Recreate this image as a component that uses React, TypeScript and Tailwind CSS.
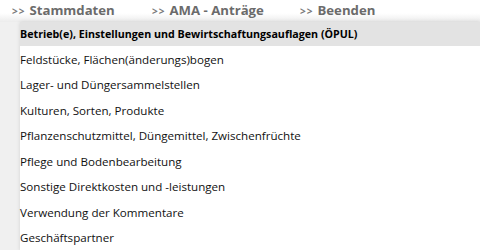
import React from 'react';

const items: string[] = [
  'Feldstücke, Flächen(änderungs)bogen',
  'Lager- und Düngersammelstellen',
  'Kulturen, Sorten, Produkte',
  'Pflanzenschutzmittel, Düngemittel, Zwischenfrüchte',
  'Pflege und Bodenbearbeitung',
  'Sonstige Direktkosten und -leistungen',
  'Verwendung der Kommentare',
  'Geschäftspartner',
];

const NavTab: React.FC<{ label: string; className?: string }> = ({ label, className }) => (
  <div className={`flex items-baseline ${className ?? ''}`}>
    <span className="text-[10px] font-bold text-[#7a7a7a] tracking-[1px]">&gt;&gt;</span>
    <span className="ml-[4px] text-[13.2px] font-bold text-[#6b6b6b]">{label}</span>
  </div>
);

export default function App() {
  return (
    <div className="w-[480px] h-[250px] overflow-hidden bg-white font-['Open_Sans','Noto_Sans',sans-serif]">
      {/* Top nav */}
      <div className="h-[22px] flex items-center pl-[12px] bg-gradient-to-b from-white from-60% to-[#ececec]">
        <NavTab label="Stammdaten" className="w-[140px]" />
        <NavTab label="AMA - Anträge" className="w-[148px]" />
        <NavTab label="Beenden" />
      </div>

      <div className="flex">
        <div className="w-[20px] h-[228px] bg-[#f0f0f0]" />
        {/* Dropdown panel */}
        <div className="flex-1 bg-white shadow-[0_0_4px_rgba(0,0,0,0.12)]">
          <div className="h-[24px] flex items-center bg-[#e3e3e3] text-[10.7px] font-bold text-black leading-none">
            Betrieb(e), Einstellungen und Bewirtschaftungsauflagen (ÖPUL)
          </div>
          <div className="pt-[1px]">
            {items.map((it) => (
              <div key={it} className="h-[25.5px] flex items-center text-[11.6px] text-[#111] leading-none">
                {it}
              </div>
            ))}
          </div>
        </div>
      </div>
    </div>
  );
}
